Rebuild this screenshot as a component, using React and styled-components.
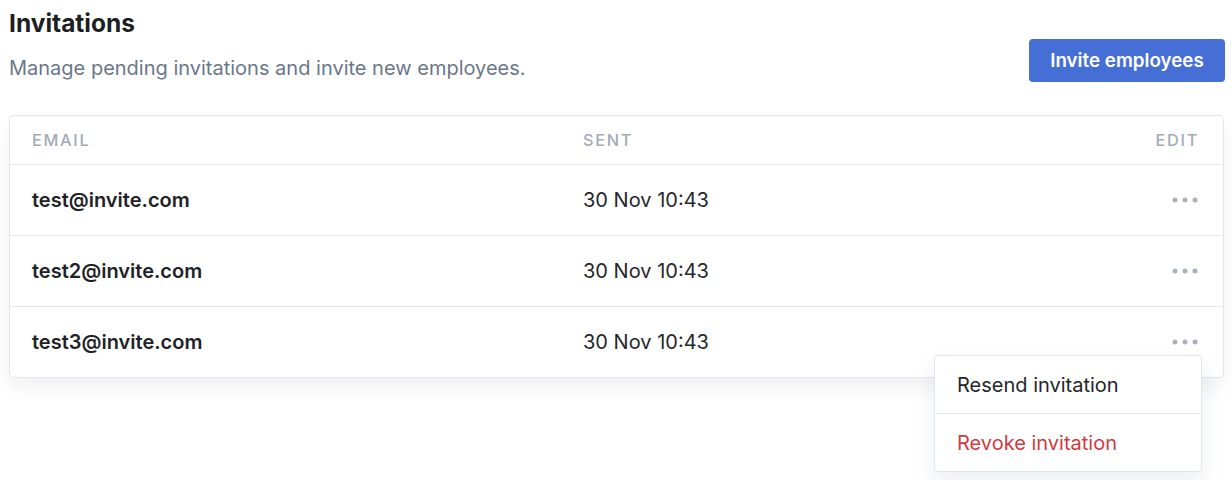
import React from 'react';
import styled, { createGlobalStyle } from 'styled-components';

const GlobalStyle = createGlobalStyle`
  body {
    margin: 0;
    background: #ffffff;
    font-family: Inter, "Noto Sans", sans-serif;
    color: #1f2328;
  }
`;

const Page = styled.div`
  box-sizing: border-box;
  min-height: 480px;
  padding: 8px 7px 0 9px;
`;

const Header = styled.div`
  display: flex;
  justify-content: space-between;
  align-items: flex-end;
`;

const Title = styled.h1`
  margin: 0;
  font-size: 24.5px;
  font-weight: 700;
  line-height: 30px;
  color: #1c1e22;
`;

const Subtitle = styled.p`
  margin: 17px 0 0;
  font-size: 20px;
  line-height: 26px;
  color: #6b778a;
`;

const PrimaryButton = styled.button`
  height: 43px;
  width: 196px;
  margin-bottom: -1px;
  border: none;
  border-radius: 4px;
  background: #466fd6;
  color: #ffffff;
  font-family: Inter, "Noto Sans", sans-serif;
  font-size: 18.8px;
  font-weight: 600;
  cursor: pointer;
`;

const TableWrap = styled.div`
  position: relative;
  margin-top: 34px;
  margin-right: 1px;
`;

const Table = styled.div`
  border: 1px solid #e2e6eb;
  border-radius: 5px;
  box-shadow: 0 10px 18px rgba(30, 40, 60, 0.06);
  background: #fff;
`;

const Row = styled.div`
  display: grid;
  grid-template-columns: 551px 1fr auto;
  align-items: center;
  height: ${p => (p.$head ? '48px' : '70px')};
  padding: 0 24px 0 22px;
  border-top: ${p => (p.$first ? 'none' : '1px solid #e4e8ed')};
`;

const HeadCell = styled.div`
  font-size: 16.3px;
  font-weight: 500;
  letter-spacing: 1.7px;
  color: #a3abb8;
  text-transform: uppercase;
  text-align: ${p => (p.$right ? 'right' : 'left')};
`;

const Email = styled.div`
  font-size: 20px;
  font-weight: 600;
  color: #1f2328;
`;

const DateCell = styled.div`
  font-size: 20px;
  color: #24272c;
`;

const DotsButton = styled.button`
  display: flex;
  align-items: center;
  justify-content: flex-end;
  padding: 0 1px 0 0;
  border: none;
  background: none;
  cursor: pointer;
`;

const Menu = styled.div`
  position: absolute;
  z-index: 2;
  top: 240px;
  right: 22px;
  width: 266px;
  background: #fff;
  border: 1px solid #e2e6eb;
  border-radius: 4px;
  box-shadow: 0 10px 22px rgba(30, 40, 60, 0.08);
`;

const MenuItem = styled.div`
  height: 57px;
  display: flex;
  align-items: center;
  padding-left: 22px;
  font-size: 20px;
  color: ${p => (p.$danger ? '#d23a3f' : '#23262b')};
  border-top: ${p => (p.$divider ? '1px solid #e2e6eb' : 'none')};
  cursor: pointer;
`;

const Dots = () => (
  <svg width="26" height="6" viewBox="0 0 26 6">
    <circle cx="3" cy="3" r="2.5" fill="#a9b1bd" />
    <circle cx="13" cy="3" r="2.5" fill="#a9b1bd" />
    <circle cx="23" cy="3" r="2.5" fill="#a9b1bd" />
  </svg>
);

const invites = [
  { email: 'test@invite.com', sent: '30 Nov 10:43' },
  { email: 'test2@invite.com', sent: '30 Nov 10:43' },
  { email: 'test3@invite.com', sent: '30 Nov 10:43' },
];

const App = () => (
  <>
    <GlobalStyle />
    <Page>
      <Header>
        <div>
          <Title>Invitations</Title>
          <Subtitle>Manage pending invitations and invite new employees.</Subtitle>
        </div>
        <PrimaryButton>Invite employees</PrimaryButton>
      </Header>

      <TableWrap>
        <Table>
          <Row $head $first>
            <HeadCell>Email</HeadCell>
            <HeadCell>Sent</HeadCell>
            <HeadCell $right>Edit</HeadCell>
          </Row>
          {invites.map(inv => (
            <Row key={inv.email}>
              <Email>{inv.email}</Email>
              <DateCell>{inv.sent}</DateCell>
              <DotsButton>
                <Dots />
              </DotsButton>
            </Row>
          ))}
        </Table>
        <Menu>
          <MenuItem>Resend invitation</MenuItem>
          <MenuItem $divider $danger>Revoke invitation</MenuItem>
        </Menu>
      </TableWrap>
    </Page>
  </>
);

export default App;
